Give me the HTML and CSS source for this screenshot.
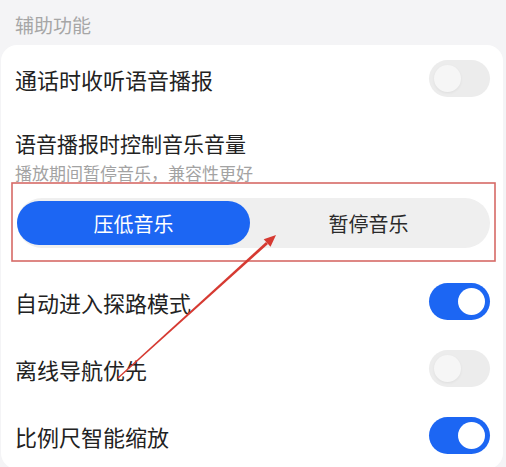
FILE: index.html
```html
<!DOCTYPE html>
<html lang="zh-CN">
<head>
    <meta charset="UTF-8">
    <meta name="viewport" content="width=device-width, initial-scale=1.0">
    <title>辅助功能</title>
    <link rel="stylesheet" href="styles.css">
</head>
<body>
    <div class="section-title">辅助功能</div>
    <div class="card">
        <div class="row">
            <span class="row-label">通话时收听语音播报</span>
            <span class="switch"></span>
        </div>
        <div class="music-block">
            <div class="music-title">语音播报时控制音乐音量</div>
            <div class="music-sub">播放期间暂停音乐，兼容性更好</div>
            <div class="segment">
                <span class="segment-item active">压低音乐</span>
                <span class="segment-item">暂停音乐</span>
            </div>
        </div>
        <div class="row">
            <span class="row-label">自动进入探路模式</span>
            <span class="switch on"></span>
        </div>
        <div class="row">
            <span class="row-label">离线导航优先</span>
            <span class="switch"></span>
        </div>
        <div class="row">
            <span class="row-label">比例尺智能缩放</span>
            <span class="switch on"></span>
        </div>
    </div>

    <!-- annotation drawn over the screenshot -->
    <svg class="annotation" width="506" height="467" viewBox="0 0 506 467">
        <rect x="12" y="183" width="483" height="78" fill="none" stroke="#d66a66" stroke-width="1.6"/>
        <polygon points="117.6,377.4 266,241.9 268,244.1 118.4,378.6" fill="#d63a32"/>
        <polygon points="276,235 270.5,246.8 263.7,239.3" fill="#d63a32"/>
    </svg>
</body>
</html>
```

FILE: styles.css
```css
body {
    font-family: "Noto Sans CJK SC", "Noto Sans", sans-serif;
    background-color: #f4f4f6;
    margin: 0;
    padding: 0;
    position: relative;
    height: 467px;
    overflow: hidden;
}
.section-title {
    height: 45px;
    box-sizing: border-box;
    padding: 12px 0 0 15px;
    font-size: 19px;
    line-height: 26px;
    color: #a6a6a6;
}
.card {
    background: white;
    border-radius: 16px;
    margin: 0 3px 0 1px;
}
.row {
    height: 67px;
    display: flex;
    align-items: center;
    justify-content: space-between;
    padding: 0 13px 0 14px;
}
.row-label {
    font-size: 22px;
    color: #222;
}
.music-block {
    padding: 16px 13px 20px 14px;
}
.music-title {
    font-size: 21px;
    line-height: 30px;
    color: #222;
}
.music-sub {
    font-size: 17px;
    line-height: 24px;
    margin-top: 3px;
    color: #a3a3a3;
}
.segment {
    margin: 13px 0 0 2px;
    height: 50px;
    box-sizing: border-box;
    padding: 3px 3px 3px 0;
    display: flex;
    background-color: #efefef;
    border-radius: 25px;
}
.segment-item {
    flex: 1;
    display: flex;
    align-items: center;
    justify-content: center;
    font-size: 20px;
    color: #2a2a2a;
    border-radius: 22px;
}
.segment-item.active {
    flex: 0 0 233px;
    background-color: #1c66f3;
    color: white;
}
.switch {
    width: 61px;
    height: 37px;
    border-radius: 19px;
    background-color: #ececec;
    position: relative;
}
.switch::after {
    content: "";
    position: absolute;
    top: 5px;
    left: 5px;
    width: 27px;
    height: 27px;
    border-radius: 50%;
    background-color: #f6f6f6;
    box-shadow: 0 1px 3px rgba(0, 0, 0, 0.06);
}
.switch.on {
    background-color: #1c66f3;
}
.switch.on::after {
    left: auto;
    right: 5px;
    background-color: white;
    box-shadow: none;
}
.annotation {
    position: absolute;
    top: 0;
    left: 0;
    pointer-events: none;
}
```
